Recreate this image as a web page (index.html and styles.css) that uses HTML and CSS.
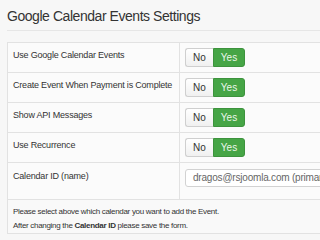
FILE: index.html
```html
<!DOCTYPE html>
<html>
<head>
<meta charset="utf-8">
<link rel="stylesheet" href="styles.css">
</head>
<body>
<div class="page">
  <h2 class="title">Google Calendar Events Settings</h2>
  <table class="settings">
    <tr>
      <td class="label">Use Google Calendar Events</td>
      <td class="control"><div class="toggle"><span class="no">No</span><span class="yes">Yes</span></div></td>
    </tr>
    <tr>
      <td class="label">Create Event When Payment is Complete</td>
      <td class="control"><div class="toggle"><span class="no">No</span><span class="yes">Yes</span></div></td>
    </tr>
    <tr>
      <td class="label">Show API Messages</td>
      <td class="control"><div class="toggle"><span class="no">No</span><span class="yes">Yes</span></div></td>
    </tr>
    <tr>
      <td class="label">Use Recurrence</td>
      <td class="control"><div class="toggle"><span class="no">No</span><span class="yes">Yes</span></div></td>
    </tr>
    <tr class="tall">
      <td class="label">Calendar ID (name)</td>
      <td class="control"><div class="select">dragos@rsjoomla.com (primary)</div></td>
    </tr>
    <tr>
      <td class="help" colspan="2">
        <p>Please select above which calendar you want to add the Event.</p>
        <p>After changing the <b>Calendar ID</b> please save the form.</p>
      </td>
    </tr>
  </table>
</div>
</body>
</html>
```
FILE: styles.css
```css
html, body {
  margin: 0;
  padding: 0;
  background: #f7f7f7;
  overflow: hidden;
}
.page {
  overflow: hidden;
  font-family: "Liberation Sans", Arial, sans-serif;
  color: #333;
}
.title {
  margin: 0 0 11px 7px;
  padding: 7px 0 5px;
  font-size: 14px;
  line-height: 18px;
  font-weight: normal;
  letter-spacing: -0.45px;
  color: #333;
  border-bottom: 1px solid #e6e6e6;
}
.settings {
  margin-left: 7px;
  border-collapse: collapse;
  table-layout: fixed;
  width: 400px;
  background: #fbfbfb;
}
.settings td {
  border: 1px solid #e2e2e2;
  vertical-align: top;
}
.label {
  width: 160px;
  padding: 6px 6px 5px 5px;
  font-size: 9px;
  line-height: 12px;
  letter-spacing: -0.2px;
  color: #333;
  height: 18px;
  white-space: nowrap;
}
.control {
  padding: 5px;
}
.toggle {
  display: flex;
  height: 19px;
  width: 60px;
}
.toggle span {
  display: flex;
  align-items: center;
  justify-content: center;
  font-size: 10px;
  box-sizing: border-box;
}
.no {
  width: 28px;
  background: linear-gradient(#ffffff, #f0f0f0);
  border: 1px solid #cfcfcf;
  border-right: none;
  border-radius: 3px 0 0 3px;
  color: #333;
}
.yes {
  width: 32px;
  background: #46a546;
  border: 1px solid #3d933d;
  border-radius: 0 3px 3px 0;
  color: #eaf6ea;
}
.tall .label {
  padding-top: 7px;
  padding-bottom: 11px;
}
.tall .control {
  padding-top: 6px;
}
.select {
  height: 18px;
  box-sizing: border-box;
  width: 150px;
  border: 1px solid #d2d2d2;
  border-radius: 3px;
  background: #fff;
  padding-left: 7px;
  font-size: 10px;
  line-height: 16px;
  letter-spacing: -0.2px;
  color: #666;
  white-space: nowrap;
  overflow: hidden;
}
.help {
  padding: 5px 5px 0 5px;
  font-size: 8px;
  letter-spacing: -0.3px;
  color: #333;
  background: #f9f9f9;
}
.help p {
  margin: 0;
  line-height: 14px;
}
```
